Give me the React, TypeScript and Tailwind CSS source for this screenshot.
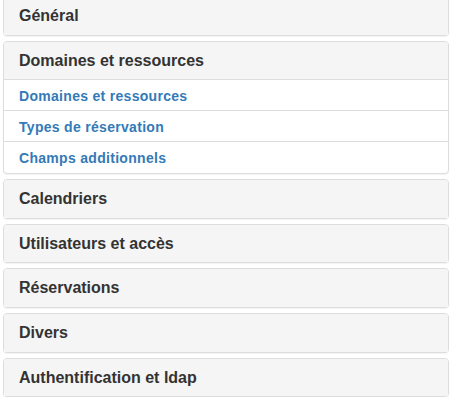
const sections = [
  { title: 'Général' },
  {
    title: 'Domaines et ressources',
    open: true,
    links: ['Domaines et ressources', 'Types de réservation', 'Champs additionnels'],
  },
  { title: 'Calendriers' },
  { title: 'Utilisateurs et accès' },
  { title: 'Réservations' },
  { title: 'Divers' },
  { title: 'Authentification et ldap' },
];

function Panel({ title, open, links }: { title: string; open?: boolean; links?: string[] }) {
  return (
    <div className="rounded-[4px] border border-[#dddddd] bg-white shadow-[0_1px_1px_rgba(0,0,0,0.05)]">
      <div className="rounded-t-[3px] bg-[#f5f5f5] px-[15px] py-[10px] text-[#333333]">
        <h4 className="text-[16px] font-bold leading-[1.1]">{title}</h4>
      </div>
      {open && links && (
        <div className="border-t border-[#dddddd] pb-px">
          {links.map((l, i) => (
            <a
              key={l}
              href="#"
              className={
                'block px-[15px] pb-[4px] pt-[6px] text-[14px] font-bold leading-[20px] tracking-[0.3px] text-[#337ab7] ' +
                (i > 0 ? 'border-t border-[#dddddd]' : '')
              }
            >
              {l}
            </a>
          ))}
        </div>
      )}
    </div>
  );
}

export default function App() {
  return (
    <div className="min-h-[399px] bg-white font-['Liberation_Sans',Arial,sans-serif] text-[14px]">
      <div className="ml-[3px] mt-[-4px] flex w-[446px] flex-col gap-[5px]">
        {sections.map((s) => (
          <Panel key={s.title} {...s} />
        ))}
      </div>
    </div>
  );
}
